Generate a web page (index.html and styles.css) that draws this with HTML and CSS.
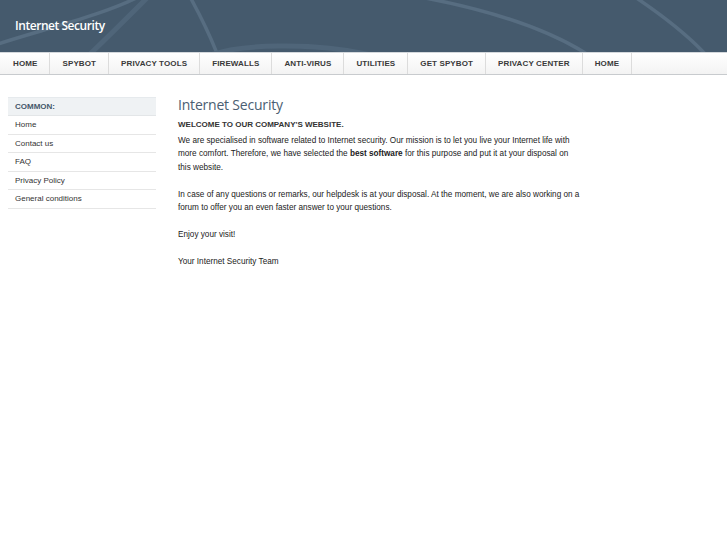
FILE: index.html
```html
<!DOCTYPE html>
<html>
<head>
<meta charset="utf-8">
<link rel="stylesheet" href="styles.css">
</head>
<body>
<header class="header">
  <svg class="header-art" width="727" height="52" viewBox="0 0 727 52">
    <path d="M-5 45 C 40 30, 105 15, 142 -5" />
    <path d="M88 56 C 110 35, 130 15, 150 -5" class="faint" />
    <path d="M189 -5 C 200 15, 210 35, 218 56" />
    <path d="M200 60 C 230 42, 320 42, 375 56" class="faint" />
    <path d="M420 -3 C 490 10, 550 30, 590 56" />
    <path d="M632 -5 C 662 15, 688 35, 707 56" />
  </svg>
  <div class="logo">Internet Security</div>
</header>
<nav class="nav">
  <a class="nav-item">HOME</a>
  <a class="nav-item">SPYBOT</a>
  <a class="nav-item">PRIVACY TOOLS</a>
  <a class="nav-item">FIREWALLS</a>
  <a class="nav-item">ANTI-VIRUS</a>
  <a class="nav-item">UTILITIES</a>
  <a class="nav-item">GET SPYBOT</a>
  <a class="nav-item">PRIVACY CENTER</a>
  <a class="nav-item">HOME</a>
</nav>
<div class="layout">
  <aside class="sidebar">
    <div class="side-head">COMMON:</div>
    <a class="side-link">Home</a>
    <a class="side-link">Contact us</a>
    <a class="side-link">FAQ</a>
    <a class="side-link">Privacy Policy</a>
    <a class="side-link">General conditions</a>
  </aside>
  <main class="content">
    <h1 class="title">Internet Security</h1>
    <h2 class="subtitle">WELCOME TO OUR COMPANY'S WEBSITE.</h2>
    <p>We are specialised in software related to Internet security. Our mission is to let you live your Internet life with more comfort. Therefore, we have selected the <b>best software</b> for this purpose and put it at your disposal on this website.</p>
    <p>In case of any questions or remarks, our helpdesk is at your disposal. At the moment, we are also working on a forum to offer you an even faster answer to your questions.</p>
    <p>Enjoy your visit!</p>
    <p>Your Internet Security Team</p>
  </main>
</div>
</body>
</html>
```
FILE: styles.css
```css
html, body {
  margin: 0;
  padding: 0;
  background: #ffffff;
}
body {
  font-family: "Liberation Sans", Arial, sans-serif;
  color: #222;
}
.header {
  position: relative;
  height: 52px;
  background: #455a6d;
  overflow: hidden;
}
.header-art {
  position: absolute;
  left: 0;
  top: 0;
}
.header-art path {
  fill: none;
  stroke: #576d81;
  stroke-width: 3.5;
}
.header-art path.faint {
  stroke: #4f6579;
  stroke-width: 5;
}
.logo {
  position: relative;
  padding: 17px 0 0 15px;
  font-family: "Open Sans", sans-serif;
  font-size: 12px;
  font-weight: 600;
  color: #ffffff;
  letter-spacing: -0.45px;
}
.nav {
  display: flex;
  height: 21px;
  padding-left: 1px;
  border-top: 1px solid #d4d8dc;
  border-bottom: 1px solid #c8cbce;
  background: linear-gradient(#ffffff, #f3f3f3);
}
.nav-item {
  display: flex;
  align-items: center;
  padding: 0 12px;
  border-right: 1px solid #dcdcdc;
  font-size: 8px;
  font-weight: bold;
  letter-spacing: 0.12px;
  color: #3a3a3a;
}
.layout {
  display: flex;
  padding: 22px 0 0 8px;
}
.sidebar {
  width: 148px;
  flex: none;
  display: flex;
  flex-direction: column;
}
.side-head {
  height: 17px;
  line-height: 17px;
  padding-left: 7px;
  background: #eff2f4;
  border-top: 1px solid #e6eaed;
  border-bottom: 1px solid #e3e6e8;
  font-size: 8px;
  font-weight: bold;
  color: #44576a;
}
.side-link {
  height: 17.5px;
  line-height: 17px;
  padding-left: 7px;
  border-bottom: 1px solid #e6e6e6;
  font-size: 8px;
  color: #333;
}
.content {
  width: 402px;
  margin-left: 22px;
  margin-top: -2px;
}
.title {
  margin: 0;
  font-family: "Open Sans", sans-serif;
  font-weight: normal;
  font-size: 14px;
  letter-spacing: -0.2px;
  color: #4a5e72;
  line-height: 20px;
}
.subtitle {
  margin: 4px 0 3px;
  font-size: 8px;
  font-weight: bold;
  color: #333;
  line-height: 12px;
}
.content p {
  margin: 0 0 13.5px;
  font-size: 8.2px;
  line-height: 13.4px;
  color: #222;
}
```
